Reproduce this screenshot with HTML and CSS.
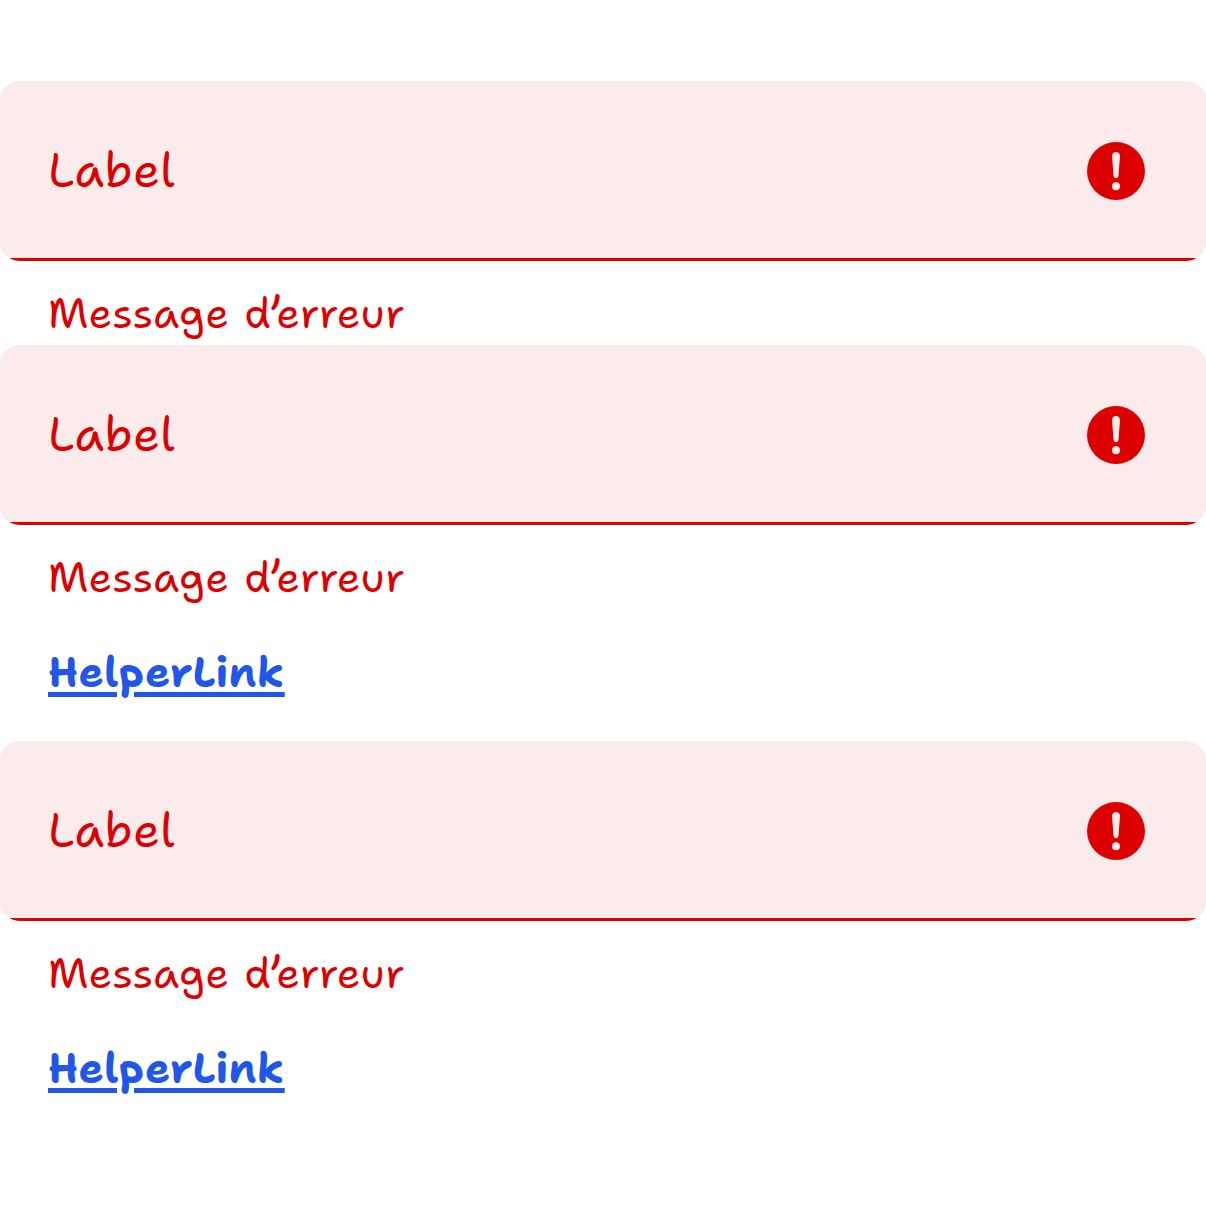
FILE: index.html
```html
<!DOCTYPE html>
<html lang="fr">
<head>
<meta charset="utf-8">
<title>Champs en erreur</title>
<link rel="stylesheet" href="styles.css">
</head>
<body>
<svg width="0" height="0" class="sprite" aria-hidden="true">
  <symbol id="error" viewBox="0 0 58 58">
    <circle cx="29" cy="29" r="29" fill="#dc0000"/>
    <path d="M25 14C25 8.7 33 8.7 33 14L31.5 33.5C31.2 37.2 26.8 37.2 26.5 33.5Z" fill="#fbebeb"/>
    <circle cx="29" cy="44.3" r="4" fill="#fbebeb"/>
  </symbol>
</svg>
<main class="page">
  <section class="field">
    <div class="input"><span class="label">Label</span><svg class="icon"><use href="#error"/></svg></div>
    <p class="message">Message d’erreur</p>
  </section>
  <section class="field field-helper">
    <div class="input"><span class="label">Label</span><svg class="icon"><use href="#error"/></svg></div>
    <p class="message">Message d’erreur</p>
    <a class="helper" href="#">HelperLink</a>
  </section>
  <section class="field field-helper">
    <div class="input"><span class="label">Label</span><svg class="icon"><use href="#error"/></svg></div>
    <p class="message">Message d’erreur</p>
    <a class="helper" href="#">HelperLink</a>
  </section>
</main>
</body>
</html>
```
FILE: styles.css
```css
* { box-sizing: border-box; }
body { margin: 0; background: #fff; font-family: "Shantell Sans", Inter, sans-serif; font-feature-settings: "cv11", "cv05"; }
.sprite { display: block; }
.page { padding-top: 81px; height: 1215px; }
.field { height: 264px; display: flex; flex-direction: column; align-items: flex-start; }
.field-helper { height: 396px; }
.input { width: 100%; height: 180px; padding: 0 61px 0 48px; display: flex; align-items: center; justify-content: space-between; background: linear-gradient(to top, #dc0000 3px, #fbebeb 3px); border-radius: 21px / 18px; }
.label { font-size: 48px; line-height: 72px; padding-bottom: 2px; letter-spacing: 0.42px; color: #dc0000; }
.icon { width: 58px; height: 58px; }
.message { margin: 22px 0 0 48px; font-size: 42px; line-height: 60px; letter-spacing: 0.46px; color: #dc0000; white-space: nowrap; }
.helper { margin: 35px 0 0 48px; font-size: 42px; line-height: 60px; font-weight: 700; letter-spacing: 0.5px; color: #2157e8; text-decoration-thickness: 5px; text-underline-offset: 5px; }
```
